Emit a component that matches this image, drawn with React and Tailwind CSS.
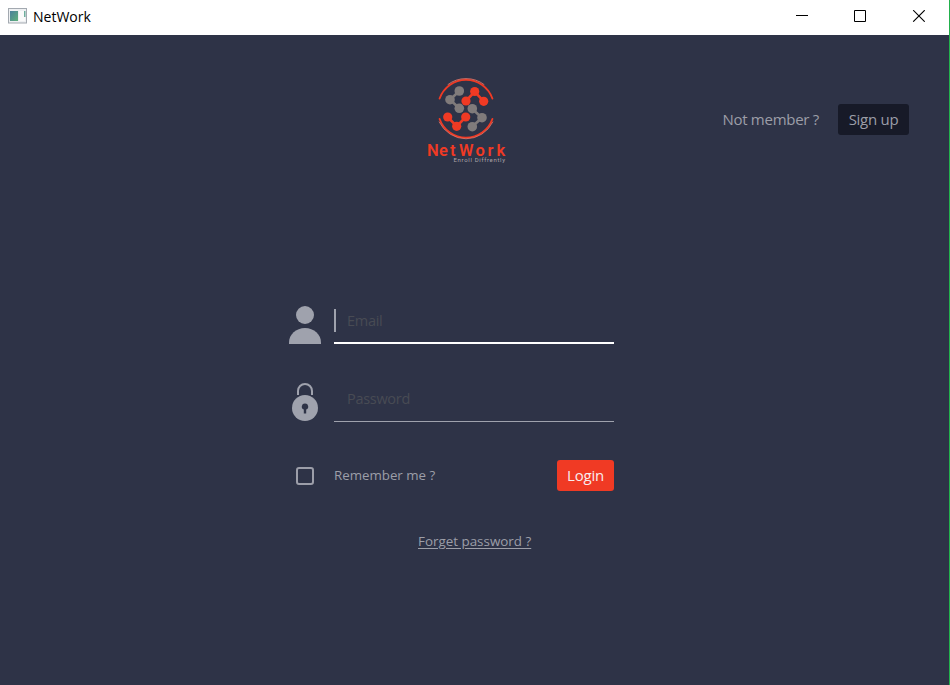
function TitleBar() {
  return (
    <header className="flex h-[35px] items-start bg-white text-black">
      <svg className="ml-2 mt-2 h-4 w-[19px]" viewBox="0 0 19 16">
        <defs>
          <linearGradient id="pane" x1="0" y1="0" x2="1" y2="1">
            <stop offset="0" stopColor="#4a7f9c" />
            <stop offset="1" stopColor="#5fb07a" />
          </linearGradient>
        </defs>
        <rect x="0.5" y="0.5" width="18" height="14.5" fill="#eef0f2" stroke="#a3a9b0" />
        <rect x="2" y="3" width="8" height="10" fill="url(#pane)" />
        <rect x="11" y="3" width="6" height="10" fill="#fafafa" />
        <rect x="16" y="3" width="1.5" height="6" fill="#6fae9d" />
      </svg>
      <h1 className="ml-[6px] mt-[7px] text-[14px] leading-5">NetWork</h1>
      <svg className="ml-auto mr-6 mt-[10px] h-3 w-[129px]" viewBox="0 0 129 12" fill="none" stroke="#000">
        <path d="M0 5.500h12" />
        <path d="M58.500.5h11v11h-11z" />
        <path d="M117.200.2l11.500 11.500M128.700.2l-11.500 11.500" strokeWidth="1.1" />
      </svg>
    </header>
  );
}

function Logo() {
  return (
    <svg className="h-[90px] w-[84px]" viewBox="424 76 84 90">
      <g fill="none" stroke="#f03a24" strokeLinecap="round">
        <path d="M439.600 98.500A28 28 0 0 1 492.400 98.500" strokeWidth="1.9" />
        <path d="M448 84.500A29.800 29.800 0 0 1 484 84.500" strokeWidth="0.8" stroke="#e8796c" />
        <path d="M439.600 119A28 28 0 0 0 492.400 119" strokeWidth="1.9" />
        <path d="M439.200 122A29.800 29.800 0 0 0 492.800 122" strokeWidth="0.8" stroke="#e8796c" />
      </g>
      <g fill="#807b7b" stroke="#807b7b">
        <path d="M459.300 91L450 99.700l9.300 8.600M472 108.700l10 9-10 9" fill="none" strokeWidth="2.6" />
        <g stroke="none">
          <circle cx="459.3" cy="91" r="4.8" /><circle cx="450" cy="99.7" r="4.8" /><circle cx="459.3" cy="108.3" r="4.8" />
          <circle cx="472.3" cy="108.7" r="4.8" /><circle cx="482" cy="117.7" r="4.8" /><circle cx="472.3" cy="126.7" r="4.8" />
        </g>
      </g>
      <g fill="#f03a24" stroke="#f03a24">
        <path d="M466 101l8.700-9.300 9 9.600M447.700 117l9 9.300 9-9.300" fill="none" strokeWidth="2.6" />
        <g stroke="none">
          <circle cx="474.7" cy="91.5" r="4.6" /><circle cx="466" cy="101" r="4.6" /><circle cx="483.7" cy="101.3" r="4.6" />
          <circle cx="447.7" cy="117" r="4.6" /><circle cx="456.7" cy="126.3" r="4.6" /><circle cx="465.7" cy="117" r="4.6" />
        </g>
      </g>
      <text x="427 439 450 459 475.5 487.5 496.500" y="155.5" fill="#f03a24" className="font-['Roboto',sans-serif] text-[16.5px] font-semibold">NetWork</text>
      <text x="453.5" y="161.9" textLength="51.5" fill="#aaa3a9" className="font-['Roboto',sans-serif] text-[6px]">Enroll Diffrently</text>
    </svg>
  );
}

function UserIcon() {
  return (
    <svg className="h-[38px] w-8" viewBox="0 0 32 38" fill="#9fa2ad">
      <circle cx="16" cy="9" r="9" />
      <path d="M0 38v-1.500C0 28.500 7 22 16 22s16 6.500 16 14.500V38z" />
    </svg>
  );
}

function LockIcon() {
  return (
    <svg className="h-[38px] w-[26px]" viewBox="0 0 26 38">
      <path d="M6 12V8a7 7 0 0 1 14 0v4" fill="none" stroke="#9fa2ad" strokeWidth="2" />
      <circle cx="13" cy="25" r="13" fill="#9fa2ad" />
      <path d="M13 20.500a3.100 3.100 0 0 1 1.200 6V30.500h-2.400v-4A3.100 3.100 0 0 1 13 20.500z" fill="#2e3347" />
    </svg>
  );
}

export default function App() {
  return (
    <div className="flex h-[685px] w-[950px] flex-col overflow-hidden bg-[#2e3347] font-['Open_Sans','Noto_Sans',sans-serif] text-[#9c9ea8]">
      <div className="flex h-full flex-col border-r border-[#22b14c]">
        <TitleBar />
        <div className="mt-[41px] grid h-[90px] grid-cols-[424px_84px_1fr]">
          <span />
          <Logo />
          <div className="mr-10 mt-7 flex h-[31px] items-center justify-end text-[15px] tracking-[-0.27px]">
            <span className="mr-[19px] whitespace-nowrap">Not member ?</span>
            <button className="h-[31px] w-[71px] whitespace-nowrap rounded-[3px] bg-[#171a28]">Sign up</button>
          </div>
        </div>

        <form className="ml-[289px] mt-[140px] w-[325px]">
          <div className="flex h-[38px]">
            <UserIcon />
            <div className="ml-[13px] flex h-[38px] w-[280px] items-start border-b-2 border-white">
              <span className="mt-[3px] h-[23px] w-0.5 bg-[#9fa2ad]" />
              <span className="ml-[11px] mt-1 text-[14.5px] leading-[22px] tracking-[-0.3px] text-[#484b54]">Email</span>
            </div>
          </div>
          <div className="mt-[39px] flex h-[39px]">
            <div className="flex w-8 justify-center"><LockIcon /></div>
            <div className="ml-[13px] h-[39px] w-[280px] border-b border-[#9fa2ad]">
              <span className="ml-[13px] mt-[5px] block text-[14.5px] leading-[22px] tracking-[-0.3px] text-[#484b54]">Password</span>
            </div>
          </div>
          <div className="mt-[38px] flex h-[31px] items-center">
            <span className="ml-[7px] h-[18px] w-[18px] rounded-[3px] border-2 border-[#9c9ea9]" />
            <span className="ml-5 mt-px text-[13.3px]">Remember me ?</span>
            <button className="ml-auto h-[31px] w-[57px] rounded-[3px] bg-[#f03a24] text-[15px] tracking-[-0.2px] text-[#f8ecee]">Login</button>
          </div>
        </form>
        <a className="ml-[418px] mt-10 w-fit text-[13.4px] leading-5 underline underline-offset-2">Forget password ?</a>
      </div>
    </div>
  );
}
